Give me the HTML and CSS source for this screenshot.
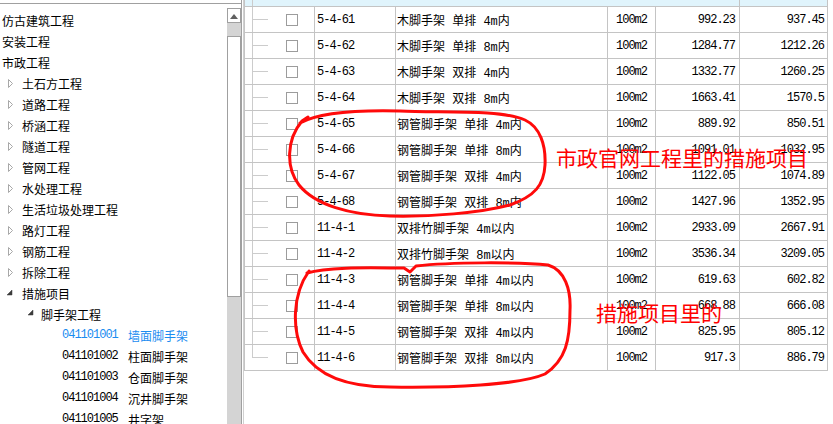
FILE: index.html
```html
<!DOCTYPE html>
<html lang="zh-CN">
<head>
<meta charset="utf-8">
<title>措施项目</title>
<link rel="stylesheet" href="styles.css">
</head>
<body>
<div class="app">
  <aside class="left">
    <div class="tree-panel">
      <ul class="tree">
        <li class="node l0">仿古建筑工程</li>
        <li class="node l0">安装工程</li>
        <li class="node l0">市政工程</li>
        <li class="node l1"><svg class="tw" width="16" height="21" viewBox="0 0 16 21"><polygon points="2.5,6.5 6.5,10.5 2.5,14.5" /></svg>土石方工程</li>
        <li class="node l1"><svg class="tw" width="16" height="21" viewBox="0 0 16 21"><polygon points="2.5,6.5 6.5,10.5 2.5,14.5" /></svg>道路工程</li>
        <li class="node l1"><svg class="tw" width="16" height="21" viewBox="0 0 16 21"><polygon points="2.5,6.5 6.5,10.5 2.5,14.5" /></svg>桥涵工程</li>
        <li class="node l1"><svg class="tw" width="16" height="21" viewBox="0 0 16 21"><polygon points="2.5,6.5 6.5,10.5 2.5,14.5" /></svg>隧道工程</li>
        <li class="node l1"><svg class="tw" width="16" height="21" viewBox="0 0 16 21"><polygon points="2.5,6.5 6.5,10.5 2.5,14.5" /></svg>管网工程</li>
        <li class="node l1"><svg class="tw" width="16" height="21" viewBox="0 0 16 21"><polygon points="2.5,6.5 6.5,10.5 2.5,14.5" /></svg>水处理工程</li>
        <li class="node l1"><svg class="tw" width="16" height="21" viewBox="0 0 16 21"><polygon points="2.5,6.5 6.5,10.5 2.5,14.5" /></svg>生活垃圾处理工程</li>
        <li class="node l1"><svg class="tw" width="16" height="21" viewBox="0 0 16 21"><polygon points="2.5,6.5 6.5,10.5 2.5,14.5" /></svg>路灯工程</li>
        <li class="node l1"><svg class="tw" width="16" height="21" viewBox="0 0 16 21"><polygon points="2.5,6.5 6.5,10.5 2.5,14.5" /></svg>钢筋工程</li>
        <li class="node l1"><svg class="tw" width="16" height="21" viewBox="0 0 16 21"><polygon points="2.5,6.5 6.5,10.5 2.5,14.5" /></svg>拆除工程</li>
        <li class="node l1"><svg class="tw open" width="16" height="21" viewBox="0 0 16 21"><polygon points="6,7 6,12 1,12" /></svg>措施项目</li>
        <li class="node l2"><svg class="tw open" width="14" height="21" viewBox="0 0 14 21"><polygon points="6,6 6,11 1,11" /></svg>脚手架工程</li>
        <li class="node l3 sel"><span class="tcode">041101001</span>墙面脚手架</li>
        <li class="node l3"><span class="tcode">041101002</span>柱面脚手架</li>
        <li class="node l3"><span class="tcode">041101003</span>仓面脚手架</li>
        <li class="node l3"><span class="tcode">041101004</span>沉井脚手架</li>
        <li class="node l3"><span class="tcode">041101005</span>井字架</li>
      </ul>
      <div class="vscroll">
        <div class="sb-btn"><svg width="12" height="13" viewBox="0 0 12 13"><polygon points="2,10 10,10 6,5" /></svg></div>
        <div class="sb-thumb"></div>
      </div>
    </div>
  </aside>
  <div class="split"></div>
  <main class="right">
    <div class="grid">
      <div class="row top">
        <div class="c tree-c"></div><div class="c"></div><div class="c"></div><div class="c"></div><div class="c vr"></div><div class="c vr"></div>
      </div>
      <div class="row"><div class="c tree-c"><span class="cb"></span></div><div class="c code">5-4-61</div><div class="c name">木脚手架 单排 4m内</div><div class="c unit">100m2</div><div class="c num">992.23</div><div class="c num n2">937.45</div></div>
      <div class="row"><div class="c tree-c"><span class="cb"></span></div><div class="c code">5-4-62</div><div class="c name">木脚手架 单排 8m内</div><div class="c unit">100m2</div><div class="c num">1284.77</div><div class="c num n2">1212.26</div></div>
      <div class="row"><div class="c tree-c"><span class="cb"></span></div><div class="c code">5-4-63</div><div class="c name">木脚手架 双排 4m内</div><div class="c unit">100m2</div><div class="c num">1332.77</div><div class="c num n2">1260.25</div></div>
      <div class="row"><div class="c tree-c"><span class="cb"></span></div><div class="c code">5-4-64</div><div class="c name">木脚手架 双排 8m内</div><div class="c unit">100m2</div><div class="c num">1663.41</div><div class="c num n2">1570.5</div></div>
      <div class="row"><div class="c tree-c"><span class="cb"></span></div><div class="c code">5-4-65</div><div class="c name">钢管脚手架 单排 4m内</div><div class="c unit">100m2</div><div class="c num">889.92</div><div class="c num n2">850.51</div></div>
      <div class="row"><div class="c tree-c"><span class="cb"></span></div><div class="c code">5-4-66</div><div class="c name">钢管脚手架 单排 8m内</div><div class="c unit">100m2</div><div class="c num">1091.01</div><div class="c num n2">1032.95</div></div>
      <div class="row"><div class="c tree-c"><span class="cb"></span></div><div class="c code">5-4-67</div><div class="c name">钢管脚手架 双排 4m内</div><div class="c unit">100m2</div><div class="c num">1122.05</div><div class="c num n2">1074.89</div></div>
      <div class="row"><div class="c tree-c"><span class="cb"></span></div><div class="c code">5-4-68</div><div class="c name">钢管脚手架 双排 8m内</div><div class="c unit">100m2</div><div class="c num">1427.96</div><div class="c num n2">1352.95</div></div>
      <div class="row"><div class="c tree-c"><span class="cb"></span></div><div class="c code">11-4-1</div><div class="c name">双排竹脚手架 4m以内</div><div class="c unit">100m2</div><div class="c num">2933.09</div><div class="c num n2">2667.91</div></div>
      <div class="row"><div class="c tree-c"><span class="cb"></span></div><div class="c code">11-4-2</div><div class="c name">双排竹脚手架 8m以内</div><div class="c unit">100m2</div><div class="c num">3536.34</div><div class="c num n2">3209.05</div></div>
      <div class="row"><div class="c tree-c"><span class="cb"></span></div><div class="c code">11-4-3</div><div class="c name">钢管脚手架 单排 4m以内</div><div class="c unit">100m2</div><div class="c num">619.63</div><div class="c num n2">602.82</div></div>
      <div class="row"><div class="c tree-c"><span class="cb"></span></div><div class="c code">11-4-4</div><div class="c name">钢管脚手架 单排 8m以内</div><div class="c unit">100m2</div><div class="c num">668.88</div><div class="c num n2">666.08</div></div>
      <div class="row"><div class="c tree-c"><span class="cb"></span></div><div class="c code">11-4-5</div><div class="c name">钢管脚手架 双排 4m以内</div><div class="c unit">100m2</div><div class="c num">825.95</div><div class="c num n2">805.12</div></div>
      <div class="row"><div class="c tree-c last"><span class="cb"></span></div><div class="c code">11-4-6</div><div class="c name">钢管脚手架 双排 8m以内</div><div class="c unit">100m2</div><div class="c num">917.3</div><div class="c num n2">886.79</div></div>
    </div>
  </main>
  <div class="annot">
    <svg class="loops" width="833" height="424" viewBox="0 0 833 424">
      <path d="M 300,123 C 320,112 360,110 400,111 C 440,113 500,109 525,120 C 540,127 546,145 545,165 C 544,185 535,196 510,205 C 480,213 430,217 390,216 C 350,215 315,205 299,185 C 286,168 286,140 302,121 L 308,117" />
      <path d="M 307,273 C 330,266 380,268 404,268 L 410,272 L 416,266 C 450,262 520,262 548,265 C 565,270 571,290 570,310 C 570,340 566,360 545,374 C 520,385 450,388 390,387 C 340,387 315,372 303,352 C 292,330 292,295 309,271" />
    </svg>
    <span class="note note1">市政官网工程里的措施项目</span>
    <span class="note note2">措施项目里的</span>
  </div>
</div>
</body>
</html>
```

FILE: styles.css
```css
* { box-sizing: border-box; }

html, body {
  margin: 0;
  padding: 0;
  background: #ffffff;
}

body {
  width: 833px;
  height: 424px;
  overflow: hidden;
  font-family: "Liberation Mono", "Noto Sans CJK SC", monospace;
  font-size: 12px;
  color: #000000;
}

.app {
  position: relative;
  display: flex;
  width: 833px;
  height: 424px;
}

/* ---------- left tree ---------- */
.left {
  width: 242px;
  flex: none;
  border-right: 1px solid #a0a0a0;
  padding-top: 3px;
  display: flex;
  flex-direction: column;
}

.tree-panel {
  flex: 1;
  display: flex;
  border-top: 1px solid #a0a0a0;
  min-height: 0;
}

.tree {
  list-style: none;
  margin: 0;
  padding: 6px 0 0 0;
  width: 227px;
  flex: none;
  overflow: hidden;
}

.node {
  display: flex;
  align-items: center;
  height: 21px;
  line-height: 21px;
  white-space: nowrap;
  font-family: "Noto Sans CJK SC", sans-serif;
}

.node.l0 { padding-left: 2px; }
.node.l1 { padding-left: 6px; }
.node.l2 { padding-left: 27px; }
.node.l3 { padding-left: 62px; }

.tw {
  flex: none;
  display: block;
}
.tw polygon {
  fill: none;
  stroke: #a8a8a8;
  stroke-width: 1;
}
.tw.open polygon {
  fill: #3c3c3c;
  stroke: #3c3c3c;
  stroke-width: 0.5;
}

.tcode {
  display: inline-block;
  width: 66px;
  flex: none;
  font-family: "Liberation Mono", monospace;
  letter-spacing: -1px;
}

.node.sel { color: #1a8cf0; }

.vscroll {
  width: 14px;
  flex: none;
  margin-top: 4px;
  background: #d4d4d4;
  display: flex;
  flex-direction: column;
}

.sb-btn {
  height: 15px;
  background: #ffffff;
  border: 1px solid #a0a0a0;
  display: flex;
  align-items: center;
  justify-content: center;
}
.sb-btn polygon { fill: #606060; }

.sb-thumb {
  margin-top: 13px;
  height: 261px;
  background: #ffffff;
  border: 1px solid #a0a0a0;
}

.split {
  width: 2px;
  flex: none;
  border-right: 1px solid #d0d0d0;
}

/* ---------- right table ---------- */
.right {
  flex: 1;
  min-width: 0;
}

.grid {
  width: 584px;
  border-left: 1px solid #c4c4c4;
}

.row {
  display: grid;
  grid-template-columns: 70px 81px 212px 48px 84px 88px;
  height: 26px;
  border-bottom: 1px solid #c4c4c4;
}

.row.top {
  height: 7px;
  background: #e0f4fc;
}

.c {
  display: flex;
  align-items: center;
  border-right: 1px solid #c4c4c4;
  white-space: nowrap;
  overflow: hidden;
}

.row.top .c { border-right-color: transparent; }
.row.top .c.vr { border-right-color: #c4c4c4; }

.tree-c {
  background:
    linear-gradient(#cccccc, #cccccc) 7px 0 / 1px 100% no-repeat,
    linear-gradient(#cccccc, #cccccc) 7px 12px / 16px 1px no-repeat;
}
.row.top .tree-c {
  background: linear-gradient(#cccccc, #cccccc) 7px 0 / 1px 100% no-repeat;
}
.tree-c.last {
  background:
    linear-gradient(#cccccc, #cccccc) 7px 0 / 1px 13px no-repeat,
    linear-gradient(#cccccc, #cccccc) 7px 12px / 16px 1px no-repeat;
}

.cb {
  display: block;
  width: 12px;
  height: 12px;
  margin-left: 41px;
  border: 1px solid #9c9c9c;
  background: #ffffff;
}

.code {
  padding-left: 2px;
  letter-spacing: -1px;
}

.name {
  padding-left: 1px;
}

.unit {
  justify-content: center;
  letter-spacing: -1px;
}

.num {
  justify-content: flex-end;
  padding-right: 4px;
  letter-spacing: -1px;
}
.num.n2 { padding-right: 3px; }

/* ---------- red annotations ---------- */
.annot {
  position: absolute;
  left: 0;
  top: 0;
  width: 833px;
  height: 424px;
  pointer-events: none;
}

.loops {
  display: block;
}
.loops path {
  fill: none;
  stroke: #ff0a0a;
  stroke-width: 3;
  stroke-linecap: round;
  stroke-linejoin: round;
}

.note {
  position: absolute;
  font-family: "Noto Sans CJK SC", sans-serif;
  font-size: 21px;
  line-height: 21px;
  color: #ff0000;
  white-space: nowrap;
}
.note1 { left: 556px; top: 147px; }
.note2 { left: 596px; top: 302px; }
```
